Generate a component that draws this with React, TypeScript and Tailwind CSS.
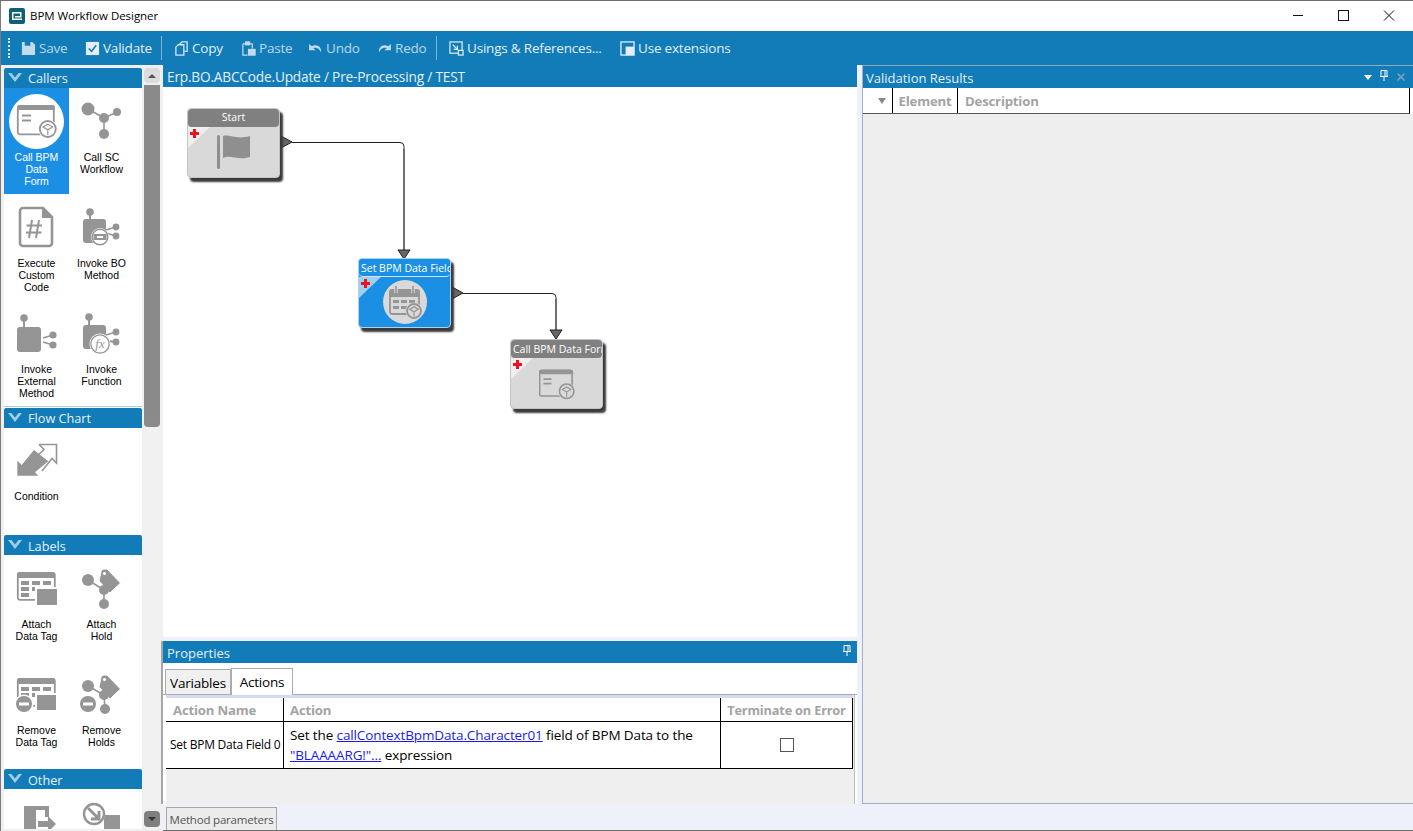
import React from 'react'
import { X } from 'lucide-react'

const gray = '#959595'

function Pin({ x, y }: { x: number; y: number }) {
  return (
    <>
      <circle cx={x} cy={y} r="3.8" fill={gray} />
      <rect x={x - 1} y={y} width="2" height="9" fill={gray} />
    </>
  )
}

function Cube({ cx, cy, r, ring = '#fff' }: { cx: number; cy: number; r: number; ring?: string }) {
  return (
    <>
      <circle cx={cx} cy={cy} r={r + 1.5} fill={ring} />
      <circle cx={cx} cy={cy} r={r} fill={ring} stroke={gray} strokeWidth="1.8" />
      <path d={`M${cx - r * 0.6} ${cy - r * 0.25}L${cx} ${cy - r * 0.6}L${cx + r * 0.6} ${cy - r * 0.25}L${cx} ${cy + r * 0.1}ZM${cx} ${cy + r * 0.1}V${cy + r * 0.75}`} fill="none" stroke={gray} strokeWidth="1.2" />
    </>
  )
}

function FormIcon({ ring = '#fff' }: { ring?: string }) {
  return (
    <svg viewBox="0 0 55 55" className="w-[55px] h-[55px]">
      <rect x="8.8" y="11.8" width="36" height="28.5" rx="2" fill="none" stroke={gray} strokeWidth="1.8" />
      <path d="M8 14a3 3 0 0 1 3-3h32a3 3 0 0 1 3 3v2H8z" fill={gray} />
      <path d="M13 21.5h9M13 26.5h9" stroke={gray} strokeWidth="1.8" />
      <Cube cx={38.8} cy={35} r={8} ring={ring} />
    </svg>
  )
}

function ScWorkflowIcon() {
  return (
    <svg viewBox="0 0 55 55" className="w-[55px] h-[55px]">
      <path d="M14 15L30 24L43 18M30 24V40" stroke={gray} strokeWidth="1.6" fill="none" />
      <circle cx="14" cy="15" r="6.5" fill={gray} />
      <circle cx="30" cy="24" r="5" fill={gray} />
      <circle cx="43" cy="18" r="4" fill={gray} />
      <circle cx="30" cy="40" r="5" fill={gray} />
    </svg>
  )
}

function CodeIcon() {
  return (
    <svg viewBox="0 0 55 55" className="w-[55px] h-[55px]">
      <path d="M14 8H34L43 17V43a3 3 0 0 1-3 3H14a3 3 0 0 1-3-3V11a3 3 0 0 1 3-3z" fill="none" stroke={gray} strokeWidth="2.6" />
      <path d="M33 8V18H43z" fill={gray} />
      <path d="M23 20L20 38M30 20L27 38M17.5 25.5H33M17 32.5H32.5" stroke={gray} strokeWidth="2" fill="none" />
    </svg>
  )
}

function BoIcon() {
  return (
    <svg viewBox="0 0 55 55" className="w-[55px] h-[55px]">
      <Pin x={16} y={12} />
      <rect x="9" y="19" width="23" height="24" rx="3" fill={gray} />
      <path d="M32 30L42 27M32 33L42 36" stroke={gray} strokeWidth="1.8" />
      <circle cx="42" cy="27" r="3.4" fill={gray} />
      <circle cx="42" cy="36" r="3.4" fill={gray} />
      <circle cx="26" cy="37" r="9" fill="#fff" />
      <circle cx="26" cy="37" r="7.8" fill="none" stroke={gray} strokeWidth="1.5" />
      <rect x="19.5" y="34" width="13" height="6" fill={gray} />
      <rect x="23" y="36" width="6" height="2" fill="#fff" />
    </svg>
  )
}

function ExternalIcon() {
  return (
    <svg viewBox="0 0 55 55" className="w-[55px] h-[55px]">
      <Pin x={15} y={12} />
      <rect x="8" y="21" width="24" height="25" rx="3" fill={gray} />
      <path d="M34 32L44 29M34 36L44 39" stroke={gray} strokeWidth="1.8" />
      <circle cx="44" cy="29" r="3.6" fill={gray} />
      <circle cx="44" cy="39" r="3.6" fill={gray} />
    </svg>
  )
}

function FunctionIcon() {
  return (
    <svg viewBox="0 0 55 55" className="w-[55px] h-[55px]">
      <Pin x={15} y={11} />
      <rect x="9" y="19" width="23" height="24" rx="3" fill={gray} />
      <path d="M32 29L42 26M34 35L42 36" stroke={gray} strokeWidth="1.8" />
      <circle cx="42" cy="26" r="3.4" fill={gray} />
      <circle cx="42" cy="36" r="3.4" fill={gray} />
      <circle cx="26" cy="38" r="10.5" fill="#fff" />
      <circle cx="26" cy="38" r="9.2" fill="none" stroke={gray} strokeWidth="1.3" />
      <text x="26" y="42" textAnchor="middle" fontSize="13" fontStyle="italic" fontFamily="'Liberation Serif', serif" fill={gray}>fx</text>
    </svg>
  )
}

function ConditionIcon() {
  return (
    <svg viewBox="0 0 55 55" className="w-[55px] h-[55px]">
      <path d="M8.3 42.7V27.7L12.7 32L25 17L39.3 28.3L26 39.3L29.3 42.7z" fill={gray} />
      <path d="M30 11.5H47.5V30L43 25.5L33 38M30 11.5L35 16.5L27 24" fill="none" stroke={gray} strokeWidth="1.6" />
    </svg>
  )
}

function TableBase({ y = 11 }: { y?: number }) {
  return (
    <>
      <rect x="8.8" y={y + 0.8} width="37" height="27" rx="2" fill="none" stroke={gray} strokeWidth="1.8" />
      <path d={`M8 ${y + 3}a3 3 0 0 1 3-3h32a3 3 0 0 1 3 3v3H8z`} fill={gray} />
      <path d={`M12 ${y + 9}h8v4h-8zM23 ${y + 9}h8v4h-8zM34 ${y + 9}h8v4h-8zM12 ${y + 15}h8v4h-8zM23 ${y + 15}h8v4h-8zM12 ${y + 21}h8v4h-8z`} fill={gray} />
    </>
  )
}

function AttachTagIcon() {
  return (
    <svg viewBox="0 0 55 55" className="w-[55px] h-[55px]">
      <TableBase />
      <rect x="26" y="26" width="23" height="19" fill="#fff" />
      <rect x="28" y="28" width="20" height="16" fill={gray} />
    </svg>
  )
}

function RemoveTagIcon() {
  return (
    <svg viewBox="0 0 55 55" className="w-[55px] h-[55px]">
      <TableBase />
      <rect x="26" y="26" width="22" height="18" fill="#fff" />
      <rect x="28" y="28" width="19" height="15" fill={gray} />
      <circle cx="15" cy="37" r="9.5" fill="#fff" />
      <circle cx="15" cy="37" r="8" fill={gray} />
      <rect x="10" y="35.5" width="10" height="3" fill="#fff" />
    </svg>
  )
}

function Tag() {
  return (
    <>
      <path d="M27 10.5Q27 8 30 8H33L46.5 22L36 32L25 20z" fill={gray} stroke="#fff" strokeWidth="1" />
      <circle cx="30.5" cy="12.5" r="1.6" fill="#fff" />
    </>
  )
}

function AttachHoldIcon() {
  return (
    <svg viewBox="0 0 55 55" className="w-[55px] h-[55px]">
      <path d="M14 19L30 29V43" stroke={gray} strokeWidth="1.6" fill="none" />
      <circle cx="14" cy="19" r="6" fill={gray} />
      <Tag />
      <circle cx="30" cy="29" r="5" fill={gray} />
      <circle cx="30" cy="43" r="5" fill={gray} />
    </svg>
  )
}

function RemoveHoldIcon() {
  return (
    <svg viewBox="0 0 55 55" className="w-[55px] h-[55px]">
      <path d="M14 19L30 28L31 42" stroke={gray} strokeWidth="1.6" fill="none" />
      <circle cx="14" cy="19" r="6" fill={gray} />
      <Tag />
      <circle cx="30" cy="28" r="5" fill={gray} />
      <circle cx="31" cy="42" r="5" fill={gray} />
      <circle cx="14" cy="37" r="8" fill={gray} />
      <rect x="9" y="35.5" width="10" height="3" fill="#fff" />
    </svg>
  )
}

function DoorIcon() {
  return (
    <svg viewBox="0 0 55 55" className="w-[55px] h-[55px]">
      <path d="M15 11H40V22H36V15H27V46H15z" fill={gray} />
      <path d="M29 26H39V21L47 29L39 37V32H29z" fill={gray} />
    </svg>
  )
}

function LoopIcon() {
  return (
    <svg viewBox="0 0 55 55" className="w-[55px] h-[55px]">
      <path d="M30 20H46V46H30z" fill={gray} />
      <circle cx="20" cy="19" r="11" fill="#fff" />
      <circle cx="20" cy="19" r="10" fill="none" stroke={gray} strokeWidth="2.4" />
      <path d="M14 13L25 24M25 16V24H17" fill="none" stroke={gray} strokeWidth="3" />
    </svg>
  )
}

function Chevron() {
  return (
    <svg viewBox="0 0 16 12" className="w-4 h-3 shrink-0 ml-[3px] mr-[5px]">
      <path d="M1 1L8 10L15 1L11.5 1L8 5.5L4.5 1z" fill="#9fcde8" />
    </svg>
  )
}

function PaletteHeader({ title, className, low }: { title: string; className?: string; low?: boolean }) {
  return (
    <div className={`h-5 bg-[#127cb8] rounded-t-[2px] flex items-center text-[12.7px] text-[#e4f0f7] ${className ?? ''}`}>
      <Chevron />
      <span className={low ? 'pt-[4px]' : 'pt-[2px]'}>{title}</span>
    </div>
  )
}

function Tool({ lines, selected, children }: { lines: string[]; selected?: boolean; children: React.ReactNode }) {
  return (
    <div className={`w-[65px] h-[106px] flex flex-col items-center pt-[6px] ${selected ? 'bg-[#1a8fe3] text-white' : 'text-black'}`}>
      {selected ? <div className="w-[55px] h-[55px] rounded-full bg-white">{children}</div> : children}
      <div className="mt-[2px] text-center text-[10.5px] leading-[12px] font-['Liberation_Sans',sans-serif]">
        {lines.map((l) => (
          <div key={l}>{l}</div>
        ))}
      </div>
    </div>
  )
}

function Palette() {
  return (
    <div className="w-[163px] shrink-0 bg-[#f0f0f0] border-l border-[#7a7a7a] pl-[3px] pt-[3px] flex">
      <div className="w-[138px] h-[761px] bg-white overflow-hidden">
        <PaletteHeader title="Callers" />
        <div className="flex flex-wrap h-[318px]">
          <Tool lines={['Call BPM', 'Data', 'Form']} selected><FormIcon /></Tool>
          <Tool lines={['Call SC', 'Workflow']}><ScWorkflowIcon /></Tool>
          <Tool lines={['Execute', 'Custom', 'Code']}><CodeIcon /></Tool>
          <Tool lines={['Invoke BO', 'Method']}><BoIcon /></Tool>
          <Tool lines={['Invoke', 'External', 'Method']}><ExternalIcon /></Tool>
          <Tool lines={['Invoke', 'Function']}><FunctionIcon /></Tool>
        </div>
        <div className="h-px bg-[#a9cfe5]" />
        <PaletteHeader title="Flow Chart" className="mt-px" />
        <div className="-mt-px">
          <Tool lines={['Condition']}><ConditionIcon /></Tool>
        </div>
        <PaletteHeader title="Labels" className="mt-[2px]" low />
        <div className="flex flex-wrap h-[212px]">
          <Tool lines={['Attach', 'Data Tag']}><AttachTagIcon /></Tool>
          <Tool lines={['Attach', 'Hold']}><AttachHoldIcon /></Tool>
          <Tool lines={['Remove', 'Data Tag']}><RemoveTagIcon /></Tool>
          <Tool lines={['Remove', 'Holds']}><RemoveHoldIcon /></Tool>
        </div>
        <PaletteHeader title="Other" className="mt-[2px]" low />
        <div className="flex">
          <Tool lines={[]}><DoorIcon /></Tool>
          <Tool lines={[]}><LoopIcon /></Tool>
        </div>
      </div>
      <div className="w-4 ml-[2px] h-[759px] flex flex-col">
        <div className="h-[15px] bg-[#dcdcdc] rounded-sm flex items-center justify-center shrink-0">
          <div className="w-0 h-0 border-x-[4px] border-x-transparent border-b-[4px] border-b-[#555]" />
        </div>
        <div className="h-[342px] mt-[2px] bg-[#8a8a8a] rounded-b-sm shrink-0" />
        <div className="flex-1" />
        <div className="h-4 bg-[#7f7f7f] rounded-sm flex items-center justify-center shrink-0">
          <div className="w-0 h-0 border-x-[4px] border-x-transparent border-t-[4px] border-t-[#333]" />
        </div>
      </div>
    </div>
  )
}

function SaveGlyph() {
  return (
    <svg viewBox="0 0 16 16" className="w-[15px] h-[15px]">
      <path d="M1 1H12L15 4V15H1z" fill="#c3dcec" />
      <rect x="4" y="1" width="6" height="4" fill="#127cb8" />
    </svg>
  )
}

function ValidateGlyph() {
  return (
    <svg viewBox="0 0 16 16" className="w-[15px] h-[15px]">
      <rect x="1" y="1" width="14" height="14" fill="#e3eff6" />
      <path d="M4 8L7 11L12 4.5" fill="none" stroke="#127cb8" strokeWidth="1.6" />
    </svg>
  )
}

function CopyGlyph() {
  return (
    <svg viewBox="0 0 16 16" className="w-[15px] h-[15px]" fill="none" stroke="#d5e6f1" strokeWidth="1.4">
      <path d="M6 3.5L8.5 1H14V11H11" />
      <path d="M2 6.5L4.5 4H10.5V15H2z" />
    </svg>
  )
}

function PasteGlyph() {
  return (
    <svg viewBox="0 0 16 16" className="w-[15px] h-[15px]" fill="none" stroke="#c3dcec" strokeWidth="1.3">
      <path d="M2 3H12V8M2 3V15H7" />
      <rect x="5" y="1" width="4" height="3" fill="#c3dcec" />
      <rect x="8" y="9" width="7" height="6" fill="#c3dcec" />
    </svg>
  )
}

function UndoGlyph() {
  return (
    <svg viewBox="0 0 16 12" className="w-[15px] h-[11px]">
      <path d="M1 1V8H8L5.5 5.5C8.5 4.5 12 5.5 14 10C15 4 9 0.5 4 3.5z" fill="#c3dcec" />
    </svg>
  )
}

function RedoGlyph() {
  return (
    <svg viewBox="0 0 16 12" className="w-[15px] h-[11px]">
      <path d="M15 1V8H8L10.5 5.5C7.5 4.5 4 5.5 2 10C1 4 7 0.5 12 3.5z" fill="#c3dcec" />
    </svg>
  )
}

function UsingsGlyph() {
  return (
    <svg viewBox="0 0 16 16" className="w-[15px] h-[15px]" fill="none" stroke="#e3eff6" strokeWidth="1.3">
      <rect x="1" y="1" width="13" height="12" />
      <path d="M4 4L9 9M9 5V9H5" />
      <rect x="10" y="10" width="5" height="5" fill="#127cb8" />
    </svg>
  )
}

function ExtensionsGlyph() {
  return (
    <svg viewBox="0 0 16 16" className="w-[15px] h-[15px]">
      <rect x="1" y="1" width="14" height="14" fill="none" stroke="#e3eff6" strokeWidth="1.4" />
      <rect x="6" y="6" width="9" height="9" fill="#e3eff6" />
    </svg>
  )
}

function ToolButton({ label, icon, dim, className }: { label: string; icon: React.ReactNode; dim?: boolean; className: string }) {
  return (
    <div className={`flex items-center gap-[3px] whitespace-nowrap ${dim ? 'text-[#bcd8e9]' : 'text-[#e3eff6]'} ${className}`}>
      {icon}
      <span>{label}</span>
    </div>
  )
}

function Toolbar() {
  return (
    <div className="h-[34px] bg-[#127cb8] flex items-center text-[13.5px] tracking-[-0.2px] shrink-0 border-l border-[#7a7a7a]">
      <div className="ml-[7px] w-px h-[20px] border-l-2 border-dotted border-[#d9e8f1]" />
      <ToolButton label="Save" icon={<SaveGlyph />} dim className="ml-[11px] w-[64px]" />
      <ToolButton label="Validate" icon={<ValidateGlyph />} className="w-[76px]" />
      <div className="w-px h-[24px] bg-[#7fb6d6] mr-[12px]" />
      <ToolButton label="Copy" icon={<CopyGlyph />} className="w-[67px]" />
      <ToolButton label="Paste" icon={<PasteGlyph />} dim className="w-[67px]" />
      <ToolButton label="Undo" icon={<UndoGlyph />} dim className="w-[69px]" />
      <ToolButton label="Redo" icon={<RedoGlyph />} dim className="w-[59px]" />
      <div className="w-px h-[24px] bg-[#7fb6d6] mr-[12px]" />
      <ToolButton label="Usings & References..." icon={<UsingsGlyph />} className="w-[171px]" />
      <ToolButton label="Use extensions" icon={<ExtensionsGlyph />} className="w-[120px]" />
    </div>
  )
}

function FlagIcon() {
  return (
    <svg viewBox="0 0 36 36" className="w-9 h-9">
      <rect x="1" y="1" width="3" height="34" rx="1.5" fill="#8f8f8f" />
      <path d="M7 2C14 0 20 6 34 2V23C22 27 14 20 7 24z" fill="#8f8f8f" />
    </svg>
  )
}

function CalendarIcon() {
  return (
    <div className="w-11 h-11 rounded-full bg-[#d9d9d9] flex items-center justify-center">
      <svg viewBox="0 0 44 44" className="w-11 h-11">
        <rect x="7" y="10" width="29" height="24" rx="2" fill="none" stroke={gray} strokeWidth="1.8" />
        <path d="M6 13a3 3 0 0 1 3-3h25a3 3 0 0 1 3 3v4H6z" fill={gray} />
        <path d="M13 6V13M30 6V13" stroke="#d9d9d9" strokeWidth="3.5" />
        <path d="M13 6V13M30 6V13" stroke={gray} strokeWidth="1.6" />
        <path d="M10 20h6v3h-6zM18 20h6v3h-6zM26 20h6v3h-6zM10 26h6v3h-6zM18 26h6v3h-6z" fill={gray} />
        <Cube cx={31} cy={31} r={7} ring="#d9d9d9" />
      </svg>
    </div>
  )
}

function Node({ title, selected, icon, className, lead }: { title: string; selected?: boolean; icon: React.ReactNode; className: string; lead: string }) {
  return (
    <div className={`absolute w-[93px] h-[70px] rounded-[4px] border flex flex-col shadow-[3px_4px_2px_#3a3a3a] ${selected ? 'bg-[#1a8fe3] border-[#a9d3f0]' : 'bg-[#d9d9d9] border-[#c4c4c4]'} ${className}`}>
      <div className={`h-[18px] shrink-0 rounded-[4px] overflow-hidden whitespace-nowrap text-[10.5px] text-white px-[2px] text-center ${lead} ${selected ? 'bg-[#1a8fe3] border-b border-[#cfe6f7]' : 'bg-[#808080]'}`}>
        {title}
      </div>
      <div className="relative flex-1 flex items-center justify-center">
        <svg viewBox="0 0 22 21" className="absolute left-0 top-0 w-[22px] h-[21px]">
          <path d="M0 0H22L0 21z" fill={selected ? '#9fd0f3' : '#efefef'} />
          <path d="M5 2H8V5H11V8H8V11H5V8H2V5H5z" fill="#f01020" />
        </svg>
        {icon}
      </div>
    </div>
  )
}

function Canvas() {
  return (
    <div className="relative h-[550px] bg-white overflow-hidden">
      <svg className="absolute inset-0 w-full h-full" viewBox="0 0 694 550">
        <path d="M129 55.5H237a4 4 0 0 1 4 4V165" fill="none" stroke="#222" strokeWidth="1" />
        <path d="M241 62V165" stroke="#666" strokeWidth="1.6" />
        <path d="M118 49L129 55L118 61z" fill="#666" stroke="#222" />
        <path d="M235 163H247L241 172z" fill="#666" stroke="#222" />
        <path d="M300 206.5H389a4 4 0 0 1 4 4V244" fill="none" stroke="#222" strokeWidth="1" />
        <path d="M393 212V244" stroke="#666" strokeWidth="1.6" />
        <path d="M289 200L300 206L289 212z" fill="#666" stroke="#222" />
        <path d="M387 243H399L393 252z" fill="#666" stroke="#222" />
      </svg>
      <Node title="Start" lead="leading-[17px]" icon={<FlagIcon />} className="left-[24px] top-[21px]" />
      <Node title="Set BPM Data Field" lead="leading-[19px]" selected icon={<CalendarIcon />} className="left-[195px] top-[171px]" />
      <Node
        title="Call BPM Data Form"
        lead="leading-[19px]"
        icon={<div className="w-9 h-9 mt-[3px] overflow-hidden flex items-center justify-center"><div className="scale-[0.9] shrink-0"><FormIcon ring="#d9d9d9" /></div></div>}
        className="left-[347px] top-[252px]"
      />
    </div>
  )
}

function PinIcon({ className }: { className?: string }) {
  return (
    <svg viewBox="0 0 8 11" className={`w-2 h-[11px] ${className ?? ''}`}>
      <path d="M1 0.5H7V6.5H1zM5 1V6M0 6.5H8M4 7V11" fill="none" stroke="#fff" strokeWidth="1" />
    </svg>
  )
}

function Properties() {
  return (
    <div className="flex-1 flex flex-col min-h-0 border-l-2 border-[#a6a6a6] -ml-[2px]">
      <div className="h-[22px] bg-[#127cb8] flex items-center justify-between pl-1 pr-[6px] text-[13px] text-[#e4f0f7] shrink-0">
        <span className="pt-[3px]">Properties</span>
        <PinIcon className="-mt-1" />
      </div>
      <div className="h-[32px] bg-white flex items-end pl-[2px] shrink-0 border-b border-[#acacac] text-[13.5px] tracking-[-0.2px]">
        <div className="w-[66px] h-[25px] bg-[#f0f0f0] border border-b-0 border-[#acacac] text-center leading-[26px]">Variables</div>
        <div className="w-[62px] h-[27px] bg-white border border-b-0 border-[#acacac] text-center leading-[26px] -mb-px">Actions</div>
      </div>
      <div className="flex-1 bg-[#efefef] ml-[3px] mr-[2px] border-r border-[#bdbdbd] min-h-0">
        <div className="border-t-[3px] border-[#d5d9f2] w-[687px]">
          <div className="flex h-[24px] bg-white border-b border-black text-[13.2px] font-bold tracking-[-0.2px] text-[#a3a3a3]">
            <div className="w-[117px] pl-[7px] leading-[24px]">Action Name</div>
            <div className="w-[437px] border-l border-black pl-[6px] leading-[24px]">Action</div>
            <div className="flex-1 border-x border-black text-center leading-[24px] whitespace-nowrap text-[12.8px]">Terminate on Error</div>
          </div>
          <div className="flex h-[47px] bg-white border-b border-black text-[13.5px] tracking-[-0.12px] text-black">
            <div className="w-[117px] flex items-center pl-[4px] text-[12px] tracking-[-0.25px] whitespace-nowrap">Set BPM Data Field 0</div>
            <div className="w-[437px] border-l border-black pl-[6px] flex flex-col justify-center leading-[20px]">
              <div>Set the <span className="text-[#1a1aee] underline">callContextBpmData.Character01</span> field of BPM Data to the</div>
              <div><span className="text-[#1a1aee] underline">"BLAAAARG!"...</span> expression</div>
            </div>
            <div className="flex-1 border-x border-black flex items-center justify-center">
              <div className="w-[14px] h-[14px] border border-[#555] bg-white" />
            </div>
          </div>
        </div>
      </div>
    </div>
  )
}

function ValidationPanel() {
  return (
    <div className="flex-1 min-w-0 flex flex-col border-l-[5px] border-[#eef0fa]">
      <div className="flex-1 min-h-0 border-l border-b border-[#a7aeca] flex flex-col">
        <div className="h-[23px] bg-[#127cb8] border-t border-[#8fa9ba] flex items-center pl-[3px] pr-[6px] text-[13px] text-[#e4f0f7] shrink-0">
          <span className="flex-1 pt-[3px]">Validation Results</span>
          <div className="w-0 h-0 border-x-[4px] border-x-transparent border-t-[5px] border-t-white mr-[8px]" />
          <PinIcon className="mr-[7px] -mt-1" />
          <X size={12} strokeWidth={3} className="text-[#7ea3b9]" />
        </div>
        <div className="h-[26px] bg-white border-b border-[#555] flex text-[13.2px] font-bold tracking-[-0.2px] text-[#a3a3a3] shrink-0 mr-[3px] border-r border-r-black">
          <div className="w-[30px] border-r border-black flex items-center justify-center pl-[8px]">
            <div className="w-0 h-0 border-x-[4px] border-x-transparent border-t-[6px] border-t-[#8a8a8a]" />
          </div>
          <div className="w-[65px] border-r border-black text-center leading-[26px]">Element</div>
          <div className="pl-[7px] leading-[26px]">Description</div>
        </div>
        <div className="flex-1 bg-[#eeeeee]" />
      </div>
    </div>
  )
}

export default function App() {
  return (
    <div className="w-[1413px] h-[831px] overflow-hidden bg-white flex flex-col font-['Open_Sans',sans-serif] border-t border-[#6e6e6e]">
      <div className="h-[30px] flex items-center shrink-0 border-l border-[#7a7a7a]">
        <svg viewBox="0 0 16 16" className="w-4 h-4 ml-2 mr-[5px]">
          <rect width="16" height="16" rx="2" fill="#0f5f78" />
          <path d="M3 4H12.5V9.5H6V8H11V5.5H4.5V10.5H13V12H3z" fill="#fff" />
        </svg>
        <span className="flex-1 text-[11.5px] tracking-[-0.05px] text-black">BPM Workflow Designer</span>
        <svg viewBox="0 0 110 12" className="w-[110px] h-3 mr-[10px]" fill="none" stroke="#111" strokeWidth="1">
          <path d="M0 5.5H10" />
          <rect x="45.5" y="0.5" width="10" height="10" />
          <path d="M91 0.5L101 10.5M101 0.5L91 10.5" />
        </svg>
      </div>
      <Toolbar />
      <div className="flex-1 min-h-0 flex">
        <Palette />
        <div className="flex-1 min-w-0 flex flex-col">
          <div className="h-[739px] flex shrink-0">
            <div className="w-[694px] flex flex-col shrink-0">
              <div className="h-[22px] bg-[#127cb8] pl-1 pt-px leading-[22px] text-[13.7px] tracking-[-0.2px] text-[#e4f0f7] shrink-0">Erp.BO.ABCCode.Update / Pre-Processing / TEST</div>
              <Canvas />
              <div className="h-1 bg-[#eef0fa] shrink-0" />
              <Properties />
            </div>
            <ValidationPanel />
          </div>
          <div className="flex-1 bg-[#eef0fa] pl-[3px] pt-[3px] border-b border-[#6e6e6e]">
            <div className="w-[111px] h-[23px] border border-b-0 border-[#a6a6a6] bg-[#ececec] text-[11.5px] tracking-[-0.2px] text-[#555] text-center leading-[24px]">Method parameters</div>
          </div>
        </div>
      </div>
    </div>
  )
}
